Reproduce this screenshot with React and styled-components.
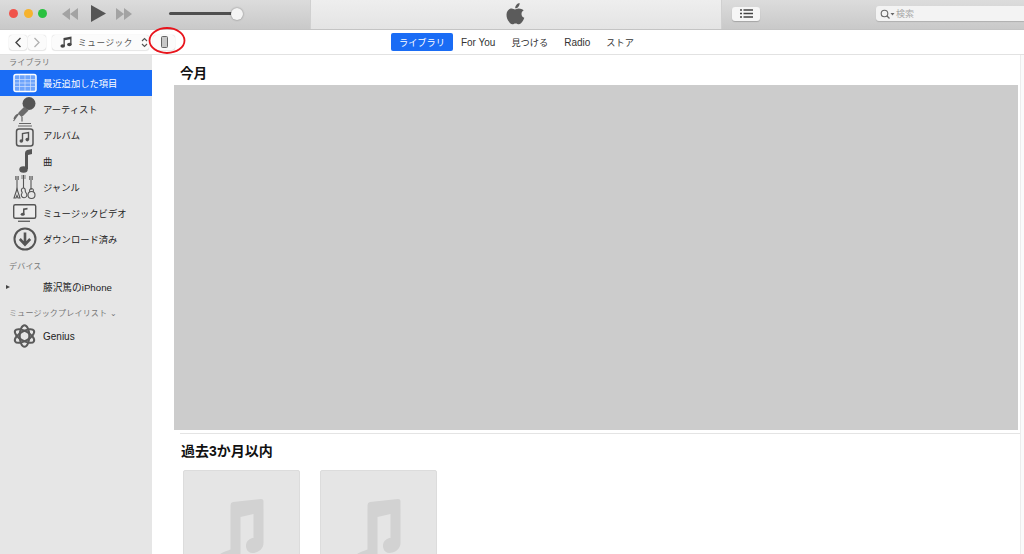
import React from 'react';
import styled, { createGlobalStyle } from 'styled-components';

const Global = createGlobalStyle`
  html, body { margin: 0; padding: 0; background: #fff; }
  body { font-family: "Liberation Sans", "Noto Sans CJK JP", sans-serif; color: #222; }
  * { box-sizing: border-box; }
`;

const Window = styled.div`
  position: relative;
  width: 1024px;
  height: 554px;
  overflow: hidden;
  display: flex;
  flex-direction: column;
`;

const TitleBar = styled.div`
  height: 30px;
  flex: none;
  display: flex;
  background: linear-gradient(#dcdcdc, #c9c9c9);
  border-bottom: 1px solid #c4c4c4;
`;

const Controls = styled.div`
  width: 310px;
  display: flex;
  align-items: center;
  padding: 0 0 2px 9px;
`;

const Light = styled.span`
  width: 9px;
  height: 9px;
  border-radius: 50%;
  margin-right: 5.5px;
  background: ${p => p.$color};
`;

const Transport = styled.svg`
  display: block;
  flex: none;
  margin-left: ${p => p.$left}px;
`;

const Volume = styled.div`
  position: relative;
  width: 68px;
  height: 3px;
  margin-left: 37px;
  background: #4f4f4f;
  border-radius: 2px;
`;

const Knob = styled.span`
  position: absolute;
  right: -6px;
  top: -4.5px;
  width: 12px;
  height: 12px;
  border-radius: 50%;
  background: #f4f4f4;
  box-shadow: 0 0 2px rgba(0, 0, 0, 0.45);
`;

const Lcd = styled.div`
  width: 412px;
  display: flex;
  align-items: center;
  justify-content: center;
  padding-bottom: 2px;
  background: linear-gradient(#eeeeee, #e4e4e4);
  border-left: 1px solid #d0d0d0;
  border-right: 1px solid #d0d0d0;
`;

const RightBar = styled.div`
  flex: 1;
  display: flex;
  align-items: center;
  justify-content: space-between;
  padding: 0 0 2px 10px;
`;

const ListButton = styled.div`
  width: 28px;
  height: 14px;
  border-radius: 3px;
  background: #f6f6f6;
  box-shadow: 0 1px 1px rgba(0, 0, 0, 0.2);
  display: flex;
  align-items: center;
  justify-content: center;
`;

const Search = styled.div`
  width: 148px;
  height: 15px;
  border-radius: 3px 0 0 3px;
  background: #f3f3f3;
  box-shadow: 0 1px 1px rgba(0, 0, 0, 0.15);
  display: flex;
  align-items: center;
  padding-left: 4px;
  gap: 1px;
  font-size: 9px;
  color: #a8a8a8;
`;

const NavBar = styled.div`
  position: relative;
  height: 25px;
  flex: none;
  display: flex;
  align-items: center;
  padding-left: 9px;
  background: #fff;
  border-bottom: 1px solid #e2e2e2;
`;

const NavButton = styled.div`
  width: ${p => p.$width || 18}px;
  height: 15px;
  margin-right: ${p => p.$gap || 0}px;
  display: flex;
  align-items: center;
  justify-content: center;
  flex: none;
  background: #fbfbfb;
  border-radius: 3px;
  box-shadow: 0 0 1px rgba(0, 0, 0, 0.25), 0 1px 1px rgba(0, 0, 0, 0.08);
`;

const Picker = styled.div`
  width: 97px;
  height: 15px;
  margin: 0 4px 0 6px;
  flex: none;
  display: flex;
  align-items: center;
  padding-left: 8px;
  font-size: 8.6px;
  letter-spacing: 0.6px;
  color: #555;
  background: #fbfbfb;
  border-radius: 3px;
  box-shadow: 0 0 1px rgba(0, 0, 0, 0.25), 0 1px 1px rgba(0, 0, 0, 0.08);
`;

const PickerNote = styled.svg`
  flex: none;
`;

const PickerLabel = styled.span`
  margin-left: 6px;
  white-space: nowrap;
`;

const PickerArrows = styled.svg`
  flex: none;
  margin-left: 8px;
`;

const Tabs = styled.div`
  position: absolute;
  left: 391px;
  top: 3px;
  display: flex;
  align-items: center;
  height: 18px;
`;

const Tab = styled.div`
  height: 18px;
  padding: 0 8px;
  display: flex;
  align-items: center;
  border-radius: 2px;
  font-size: ${p => p.$size || 9.2}px;
  white-space: nowrap;
  color: ${p => (p.$active ? '#fff' : '#333')};
  background: ${p => (p.$active ? '#1a6cf5' : 'transparent')};
`;

const RedCircle = styled.svg`
  position: absolute;
  left: 147px;
  top: -3px;
`;

const Body = styled.div`
  flex: 1;
  min-height: 0;
  display: flex;
`;

const Sidebar = styled.aside`
  width: 152px;
  flex: none;
  background: #e6e6e6;
  padding-top: 2px;
`;

const SectionLabel = styled.div`
  height: 12px;
  line-height: 12px;
  padding-left: 9px;
  font-size: 8px;
  letter-spacing: 0.2px;
  color: #777;
  margin-top: ${p => p.$top || 0}px;
  margin-bottom: ${p => p.$bottom || 0}px;
`;

const Item = styled.div`
  position: relative;
  height: 26px;
  display: flex;
  align-items: center;
  padding-left: 43px;
  font-size: ${p => p.$size || 9.3}px;
  white-space: nowrap;
  color: ${p => (p.$active ? '#fff' : '#222')};
  background: ${p => (p.$active ? '#1a6cf5' : 'transparent')};
`;

const ItemIcon = styled.svg`
  position: absolute;
  left: 12px;
  top: 0;
`;

const Arrow = styled.span`
  position: absolute;
  left: 6px;
  top: 11px;
  width: 0;
  height: 0;
  border-left: 4px solid #444;
  border-top: 2.5px solid transparent;
  border-bottom: 2.5px solid transparent;
`;

const Main = styled.main`
  flex: 1;
  min-width: 0;
  background: #fff;
  padding-right: 6px;
  position: relative;
`;

const Scrollbar = styled.div`
  position: absolute;
  right: 0;
  top: 0;
  bottom: 0;
  width: 4px;
  background: #fafafa;
  border-left: 1px solid #ececec;
`;

const Heading = styled.h2`
  margin: 0;
  padding-left: 28px;
  font-size: 13.6px;
  font-weight: bold;
  color: #111;
  height: 30px;
  line-height: 37px;
`;

const Section = styled.section`
  padding-left: 22px;
`;

const GrayBlock = styled.div`
  height: 345px;
  background: #cccccc;
`;

const Divider = styled.div`
  height: 1px;
  margin: 3px -6px 0 6px;
  background: #e4e4e4;
`;

const RecentHeading = styled(Heading)`
  height: 36px;
  line-height: 34px;
  padding-left: 29px;
  font-size: 14px;
`;

const Albums = styled.div`
  display: flex;
  gap: 20px;
  padding-left: 31px;
`;

const Album = styled.div`
  width: 117px;
  height: 120px;
  display: flex;
  justify-content: center;
  background: #e5e5e5;
  border: 1px solid #dcdcdc;
  border-radius: 2px;
  overflow: hidden;
  padding-top: 28px;
`;

const NoteShape = styled.svg`
  flex: none;
`;

const Note = () => (
  <NoteShape width="50" height="70" viewBox="0 0 50 70">
    <path
      fill="#d2d2d2"
      d="M13.5 6Q13.5 3.500 16 3L44 0Q46.500 0 46.500 2L46.500 44C46.500 50 41 54 35 54C31 54 29 50 29 47C29 42 32 40 37 38.500L36.500 38L36.500 15L23.500 18L23.500 58C23.500 64 18 68 11 68C4 68 .5 64 .5 60C.5 55 6 53 11 51.500L13.500 50.500Z"
    />
  </NoteShape>
);

const icons = {
  recent: (
    <ItemIcon width="26" height="26" viewBox="0 0 26 26">
      <rect x="2" y="4.500" width="22" height="17" rx="2" fill="#6ea4fb" stroke="#fff" strokeWidth="1.500" />
      <path d="M2 9.500h22M2 13h22M2 16.500h22M7.500 5v16M13 5v16M18.500 5v16" stroke="#d5e4fd" strokeWidth="0.700" />
    </ItemIcon>
  ),
  artist: (
    <ItemIcon width="26" height="26" viewBox="0 0 26 26">
      <circle cx="17" cy="7.500" r="6.500" fill="#555" />
      <path d="M12.500 10.500l4 4-5.500 5.500-1.500 1-3.500-3.500 1-1.500z" fill="#6b6b6b" />
      <path d="M6.500 18L1.500 25M10 21v4.500M6.500 18c-3 1-4 3-4.500 5" stroke="#666" strokeWidth="1.200" fill="none" />
    </ItemIcon>
  ),
  album: (
    <ItemIcon width="26" height="26" viewBox="0 0 26 26">
      <path d="M7 1.500h12M6 4h14" stroke="#666" strokeWidth="1.200" />
      <rect x="4.500" y="7" width="16.500" height="17" rx="2.500" fill="none" stroke="#555" strokeWidth="1.500" />
      <path d="M10.500 19v-7.500l6-1v7" stroke="#555" strokeWidth="1.400" fill="none" />
      <circle cx="9.300" cy="19" r="1.800" fill="#555" />
      <circle cx="15.300" cy="17.600" r="1.800" fill="#555" />
    </ItemIcon>
  ),
  song: (
    <ItemIcon width="26" height="26" viewBox="0 0 26 26">
      <path d="M13 21V5q0-2 2-3l5-1v5l-4 1V21z" fill="#555" />
      <ellipse cx="11.500" cy="21.500" rx="4.200" ry="3.200" fill="#555" />
    </ItemIcon>
  ),
  genre: (
    <ItemIcon width="26" height="26" viewBox="0 0 26 26" fill="none" stroke="#555" strokeWidth="1.100">
      <path d="M5 2v14M11.500 1v13M19 2v14" />
      <path d="M3.500 2v4M6.500 2v4M10 1v4M13 1v4M17.500 2v4M20.500 2v4" strokeWidth="0.700" />
      <path d="M5 15L2 24h2l1-2.500L6 24h2z" />
      <path d="M11.500 14c-2.500 0-2.500 3-1.500 4s-1.500 2-.5 4 3.500 2.500 5 .5-.5-3.500-1-4.500 .5-4-2-4z" />
      <circle cx="19.500" cy="21" r="3.500" />
      <path d="M19.500 14.500c-2 0-2.200 2-1.700 3.500M19.500 14.500c2 0 2.200 2 1.700 3.500" />
    </ItemIcon>
  ),
  video: (
    <ItemIcon width="26" height="26" viewBox="0 0 26 26">
      <rect x="1.700" y="4.700" width="22" height="13.600" rx="1.500" fill="#ececec" stroke="#555" strokeWidth="1.400" />
      <path d="M11 14V8.500l4.500-.8v1.800L12.500 10v4z" fill="#555" />
      <ellipse cx="10.700" cy="14.200" rx="2" ry="1.500" fill="#555" />
      <path d="M6 21.300h12" stroke="#666" strokeWidth="1.400" />
    </ItemIcon>
  ),
  download: (
    <ItemIcon width="26" height="26" viewBox="0 0 26 26" fill="none">
      <circle cx="13" cy="13" r="10.500" stroke="#555" strokeWidth="2" />
      <path d="M13 6.500v11M7.800 13l5.200 5.500 5.200-5.500" stroke="#555" strokeWidth="2.600" />
    </ItemIcon>
  ),
  genius: (
    <ItemIcon width="26" height="26" viewBox="0 0 26 26" fill="none" stroke="#5a5a5a" strokeWidth="2">
      <ellipse cx="12.500" cy="13" rx="4.800" ry="10.800" />
      <ellipse cx="12.500" cy="13" rx="4.800" ry="10.800" transform="rotate(60 12.500 13)" />
      <ellipse cx="12.500" cy="13" rx="4.800" ry="10.800" transform="rotate(120 12.500 13)" />
    </ItemIcon>
  ),
};

const SmallNote = () => (
  <PickerNote width="12" height="12" viewBox="0 0 12 12">
    <path d="M3.500 2L11.500.5v8h-1.300V3.200L4.800 4.200V10H3.500z" fill="#444" />
    <ellipse cx="2.700" cy="10" rx="2.300" ry="1.800" fill="#444" />
    <ellipse cx="9.400" cy="8.500" rx="2.300" ry="1.800" fill="#444" />
  </PickerNote>
);

export default function App() {
  return (
    <Window>
      <Global />
      <TitleBar>
        <Controls>
          <Light $color="#f0544c" />
          <Light $color="#f6b32e" />
          <Light $color="#2ac140" />
          <Transport $left={9} width="16" height="12" viewBox="0 0 16 12">
            <path d="M8 0v12L0 6zM16 0v12L8 6z" fill="#a3a3a3" />
          </Transport>
          <Transport $left={13} width="15" height="17" viewBox="0 0 15 17">
            <path d="M0 0l15 8.500-15 8.500z" fill="#555" />
          </Transport>
          <Transport $left={10} width="16" height="12" viewBox="0 0 16 12">
            <path d="M0 0v12l8-6zM8 0v12l8-6z" fill="#a3a3a3" />
          </Transport>
          <Volume>
            <Knob />
          </Volume>
        </Controls>
        <Lcd>
          <svg width="20" height="24" viewBox="0 0 20 24">
            <path
              fill="#5b5b5b"
              d="M13.600 1c.1 1.500-.4 2.700-1.200 3.700-.9 1-2 1.700-3.200 1.600-.1-1.400.5-2.700 1.300-3.600C11.300 1.800 12.600 1.100 13.600 1zM17.700 8.300c-1.300.8-2.200 2-2.200 3.600 0 1.900 1.100 3.200 2.800 3.900-.5 1.500-1.200 2.900-2.200 4.200-.9 1.200-1.800 2.300-3.200 2.300-1.300 0-1.800-.8-3.300-.8-1.600 0-2.100.8-3.300.8-1.400 0-2.400-1.300-3.300-2.500C1.400 17.900.5 15.200.5 12.700c0-4 2.600-6.100 5.100-6.100 1.400 0 2.500.9 3.400.9.800 0 2.100-1 3.700-1 1.900 0 3.500.8 5 1.800z"
            />
          </svg>
        </Lcd>
        <RightBar>
          <ListButton>
            <svg width="13" height="9" viewBox="0 0 13 9">
              <path d="M0 1h2M3.500 1H13M0 4.500h2M3.500 4.500H13M0 8h2M3.500 8H13" stroke="#444" strokeWidth="1.400" />
            </svg>
          </ListButton>
          <Search>
            <svg width="15" height="10" viewBox="0 0 15 10" fill="none">
              <circle cx="4.500" cy="4.500" r="3.300" stroke="#666" strokeWidth="1.100" />
              <path d="M7 7l2.500 2.500" stroke="#666" strokeWidth="1.200" />
              <path d="M10.500 4h4L12.500 6.500z" fill="#666" />
            </svg>
            検索
          </Search>
        </RightBar>
      </TitleBar>
      <NavBar>
        <NavButton $gap={1}>
          <svg width="8" height="11" viewBox="0 0 8 11" fill="none">
            <path d="M6.500 1L2 5.500 6.500 10" stroke="#444" strokeWidth="1.400" />
          </svg>
        </NavButton>
        <NavButton>
          <svg width="8" height="11" viewBox="0 0 8 11" fill="none">
            <path d="M1.500 1L6 5.500 1.500 10" stroke="#b0b0b0" strokeWidth="1.300" />
          </svg>
        </NavButton>
        <Picker>
          <SmallNote />
          <PickerLabel>ミュージック</PickerLabel>
          <PickerArrows width="7" height="11" viewBox="0 0 7 11" fill="none">
            <path d="M1 4l2.500-2.500L6 4M1 7l2.500 2.500L6 7" stroke="#555" strokeWidth="1.100" />
          </PickerArrows>
        </Picker>
        <NavButton $width={22}>
          <svg width="7" height="12" viewBox="0 0 7 12">
            <rect x="0.500" y="0.500" width="6" height="11" rx="1" fill="#c8c8c8" stroke="#666" strokeWidth="1" />
          </svg>
        </NavButton>
        <Tabs>
          <Tab $active>ライブラリ</Tab>
          <Tab $size={10}>For You</Tab>
          <Tab>見つける</Tab>
          <Tab $size={10}>Radio</Tab>
          <Tab>ストア</Tab>
        </Tabs>
        <RedCircle width="42" height="30" viewBox="0 0 42 30" fill="none">
          <ellipse cx="20" cy="13.500" rx="17.500" ry="12.500" stroke="#e8141c" strokeWidth="1.800" />
        </RedCircle>
      </NavBar>
      <Body>
        <Sidebar>
          <SectionLabel $bottom={1}>ライブラリ</SectionLabel>
          <Item $active>{icons.recent}最近追加した項目</Item>
          <Item>{icons.artist}アーティスト</Item>
          <Item>{icons.album}アルバム</Item>
          <Item>{icons.song}曲</Item>
          <Item>{icons.genre}ジャンル</Item>
          <Item>{icons.video}ミュージックビデオ</Item>
          <Item>{icons.download}ダウンロード済み</Item>
          <SectionLabel $top={9} $bottom={1}>デバイス</SectionLabel>
          <Item $size={9.7}><Arrow />藤沢篤のiPhone</Item>
          <SectionLabel $top={8} $bottom={3}>ミュージックプレイリスト ⌄</SectionLabel>
          <Item $size={10}>{icons.genius}Genius</Item>
        </Sidebar>
        <Main>
          <Scrollbar />
          <Heading>今月</Heading>
          <Section>
            <GrayBlock />
            <Divider />
          </Section>
          <RecentHeading>過去3か月以内</RecentHeading>
          <Albums>
            <Album><Note /></Album>
            <Album><Note /></Album>
          </Albums>
        </Main>
      </Body>
    </Window>
  );
}
